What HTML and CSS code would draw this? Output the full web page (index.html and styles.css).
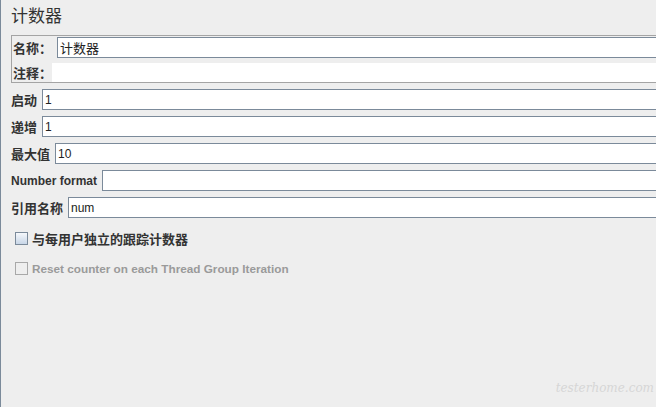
FILE: index.html
```html
<!DOCTYPE html>
<html lang="zh">
  <head>
    <meta charset="UTF-8" />
    <title>计数器</title>
    <link rel="stylesheet" href="styles.css">
  </head>
  <body>
    <div class="page">
      <h1 class="title">计数器</h1>

      <div class="name-panel">
        <div class="name-row">
          <label class="cn">名称：</label>
          <input class="field" type="text" value="计数器" />
        </div>
        <div class="comment-row">
          <label class="cn">注释：</label>
          <div class="comment-area"></div>
        </div>
      </div>

      <div class="fields">
        <div class="field-row">
          <label class="cn">启动</label>
          <input class="field" type="text" value="1" />
        </div>
        <div class="field-row">
          <label class="cn">递增</label>
          <input class="field" type="text" value="1" />
        </div>
        <div class="field-row">
          <label class="cn">最大值</label>
          <input class="field" type="text" value="10" />
        </div>
        <div class="field-row">
          <label class="latin">Number format</label>
          <input class="field" type="text" value="" />
        </div>
        <div class="field-row">
          <label class="cn">引用名称</label>
          <input class="field" type="text" value="num" />
        </div>
      </div>

      <div class="checks">
        <label class="check">
          <input type="checkbox" />
          <span class="cn">与每用户独立的跟踪计数器</span>
        </label>
        <label class="check disabled">
          <input type="checkbox" disabled />
          <span class="latin small">Reset counter on each Thread Group Iteration</span>
        </label>
      </div>
    </div>

    <div class="watermark">testerhome.com</div>
  </body>
</html>
```

FILE: styles.css
```css
html,
body {
  margin: 0;
  height: 100%;
  overflow: hidden;
}
body {
  position: relative;
  background-color: #eeeeee;
  border-left: 1px solid #7b8a9a;
  font-family: "Liberation Sans", "Noto Sans CJK SC", sans-serif;
  color: #333;
}
.page {
  padding-left: 10px;
}
.title {
  margin: 7px 0 8px;
  height: 20px;
  line-height: 20px;
  font-size: 17px;
  font-weight: normal;
  color: #333;
}
.cn {
  font-size: 13px;
  font-weight: bold;
}
.latin {
  font-size: 12px;
  font-weight: bold;
}
.latin.small {
  font-size: 11.75px;
}
.field {
  box-sizing: border-box;
  flex: 1;
  min-width: 0;
  height: 21px;
  margin: 0;
  padding: 0 2px;
  border: 1px solid #7b8a9a;
  border-right: none;
  background: white;
  font-family: "Liberation Sans", "Noto Sans CJK SC", sans-serif;
  font-size: 12px;
  color: #222;
  outline: none;
}
.name-panel {
  display: flex;
  flex-direction: column;
  gap: 5px;
  padding: 1px 0 0 1px;
  border: 1px solid #a4a4a4;
  border-right: none;
}
.name-row,
.comment-row {
  display: flex;
  align-items: center;
}
.name-row label {
  width: 39px;
  margin-right: 5px;
  white-space: nowrap;
}
.name-row .field {
  font-size: 13px;
}
.comment-row label {
  width: 39px;
  white-space: nowrap;
}
.comment-area {
  flex: 1;
  height: 19px;
  background: white;
}
.fields {
  display: flex;
  flex-direction: column;
  gap: 6px;
  margin-top: 6px;
}
.field-row {
  display: flex;
  align-items: center;
  gap: 5px;
}
.field-row label {
  white-space: nowrap;
}
.checks {
  display: flex;
  flex-direction: column;
  gap: 17px;
  padding: 14px 0 0 4px;
}
.check {
  display: flex;
  align-items: center;
  gap: 4px;
  height: 13px;
  white-space: nowrap;
}
.check input {
  appearance: none;
  box-sizing: border-box;
  width: 13px;
  height: 13px;
  margin: 0;
  border: 1px solid #7b8a9a;
  background: linear-gradient(to bottom, #f6f8fb, #c8d6e7);
}
.check.disabled {
  color: #9a9a9a;
}
.check.disabled input {
  border-color: #a8a8a8;
  background: transparent;
}
.watermark {
  position: absolute;
  right: 2px;
  bottom: 12px;
  font-family: "DejaVu Serif", serif;
  font-style: italic;
  font-size: 12px;
  color: #d6d6d6;
}
```
